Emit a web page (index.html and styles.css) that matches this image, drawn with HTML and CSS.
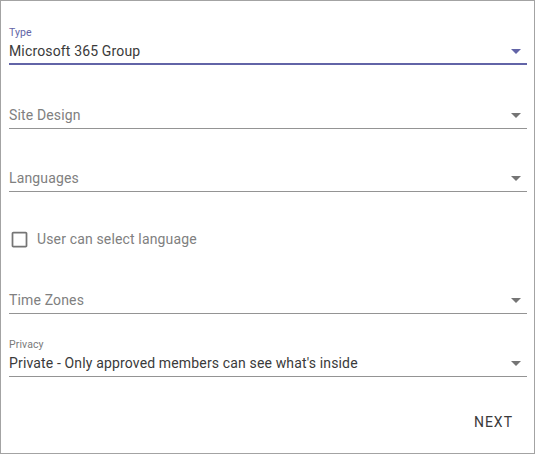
FILE: index.html
```html
<!DOCTYPE html>
<html lang="en">
<head>
<meta charset="utf-8">
<title>Create site</title>
<link rel="stylesheet" href="styles.css">
</head>
<body>
<div class="frame">
  <div class="field focused">
    <div class="label">Type</div>
    <div class="input">
      <span class="value">Microsoft 365 Group</span>
      <svg class="arrow" viewBox="0 0 24 24" width="24" height="24"><path d="M7 10l5 5 5-5z"/></svg>
    </div>
  </div>
  <div class="field">
    <div class="label"></div>
    <div class="input">
      <span class="placeholder">Site Design</span>
      <svg class="arrow" viewBox="0 0 24 24" width="24" height="24"><path d="M7 10l5 5 5-5z"/></svg>
    </div>
  </div>
  <div class="field tight">
    <div class="label"></div>
    <div class="input">
      <span class="placeholder">Languages</span>
      <svg class="arrow" viewBox="0 0 24 24" width="24" height="24"><path d="M7 10l5 5 5-5z"/></svg>
    </div>
  </div>
  <label class="check">
    <svg class="box" viewBox="0 0 24 24" width="21" height="21"><path d="M19 5v14H5V5h14m0-2H5c-1.1 0-2 .9-2 2v14c0 1.1.9 2 2 2h14c1.1 0 2-.9 2-2V5c0-1.1-.9-2-2-2z"/></svg>
    <span class="check-text">User can select language</span>
  </label>
  <div class="field">
    <div class="label"></div>
    <div class="input">
      <span class="placeholder">Time Zones</span>
      <svg class="arrow" viewBox="0 0 24 24" width="24" height="24"><path d="M7 10l5 5 5-5z"/></svg>
    </div>
  </div>
  <div class="field tight">
    <div class="label gray">Privacy</div>
    <div class="input">
      <span class="value">Private - Only approved members can see what's inside</span>
      <svg class="arrow" viewBox="0 0 24 24" width="24" height="24"><path d="M7 10l5 5 5-5z"/></svg>
    </div>
  </div>
  <div class="actions">
    <button class="btn" type="button">Next</button>
  </div>
</div>
</body>
</html>
```

FILE: styles.css
```css
html, body {
  margin: 0;
  padding: 0;
  background: #fff;
}

.frame {
  box-sizing: border-box;
  width: 535px;
  height: 454px;
  border: 1px solid #a3a3a3;
  padding: 0 7px 0 8px;
  font-family: Roboto, "Liberation Sans", sans-serif;
}

.field {
  margin-top: 26px;
}

.field.tight {
  margin-top: 25px;
}

.label {
  height: 12px;
  font-size: 10.5px;
  line-height: 12px;
  color: #6264a7;
  margin-bottom: 3px;
  letter-spacing: 0.1px;
}

.label.gray {
  color: #7a7a7a;
}

.input {
  position: relative;
  height: 18px;
  line-height: 18px;
  font-size: 14px;
  letter-spacing: 0.15px;
  padding-bottom: 4px;
  border-bottom: 1px solid #949494;
}

.focused .input {
  padding-bottom: 3px;
  border-bottom: 2px solid #6264a7;
}

.value {
  color: #3a3a3a;
}

.placeholder {
  color: #808080;
}

.arrow {
  position: absolute;
  right: -1px;
  top: -3px;
  fill: #757575;
}

.focused .arrow {
  fill: #6264a7;
}

.check {
  display: flex;
  align-items: center;
  height: 24px;
  margin-top: 35px;
  margin-bottom: -1px;
}

.box {
  fill: #757575;
  margin-left: 0;
  margin-right: 7px;
}

.check-text {
  font-size: 14px;
  letter-spacing: 0.15px;
  color: #808080;
}

.actions {
  display: flex;
  justify-content: flex-end;
  margin-top: 27px;
  margin-right: 6px;
}

.btn {
  font-family: Roboto, "Liberation Sans", sans-serif;
  font-size: 14px;
  font-weight: 400;
  letter-spacing: 1px;
  text-transform: uppercase;
  color: #3a3a3a;
  background: none;
  border: 0;
  padding: 6px 8px;
  height: 36px;
  line-height: 24px;
  cursor: pointer;
}
```
